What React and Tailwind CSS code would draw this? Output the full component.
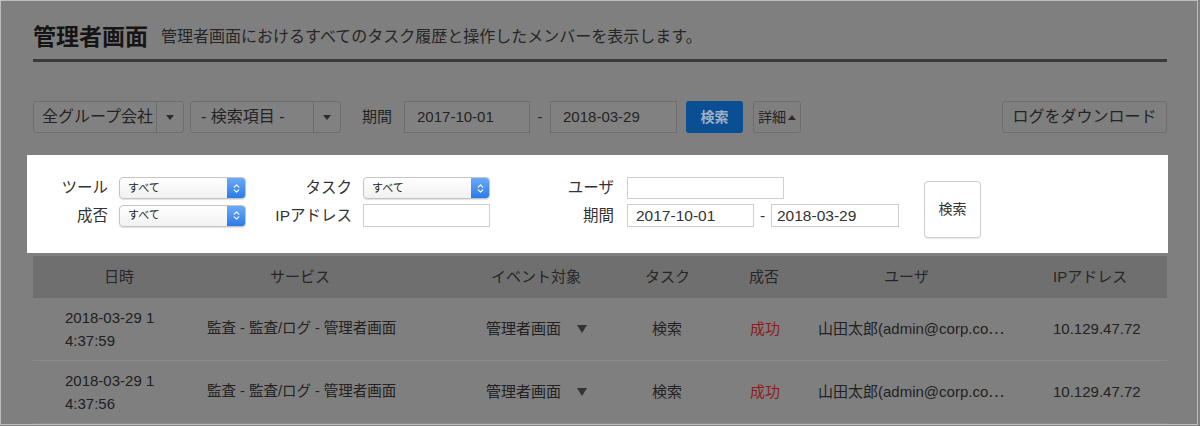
import { ChevronsUpDown } from 'lucide-react'

const font = "font-['Liberation_Sans','Noto_Sans_CJK_JP',sans-serif]"

const MacSelect = ({ width = 'w-[127px]' }) => (
  <div className={`${width} h-[22px] flex rounded-[4px] border border-[#c4c4c4] bg-gradient-to-b from-white to-[#f1f1f1] shadow-[0_1px_1px_rgba(0,0,0,0.12)] overflow-hidden`}>
    <div className="flex-1 flex items-center pl-[8px] text-[11px] text-[#222]">すべて</div>
    <div className="w-[18px] flex items-center justify-center bg-gradient-to-b from-[#6aaaf8] to-[#2a7ae8] text-white">
      <ChevronsUpDown size={11} strokeWidth={2.5} />
    </div>
  </div>
)

const Caret = () => (
  <svg width="8" height="5" viewBox="0 0 8 5"><path d="M0 0h8L4 5z" fill="#2c2c2c" /></svg>
)

const cols = [
  { w: 'w-[157px]', head: 'pl-[71px]', body: 'pl-[32px]' },
  { w: 'w-[250px]', head: 'pl-[80px]', body: 'pl-[17px]' },
  { w: 'w-[190px]', head: 'pl-[51px]', body: 'pl-[46px]' },
  { w: 'w-[90px]', head: 'pl-[15px]', body: 'pl-[22px]' },
  { w: 'w-[80px]', head: 'pl-[29px]', body: 'pl-[30px]' },
  { w: 'w-[230px]', head: 'pl-[84px]', body: 'pl-[18px]' },
  { w: 'w-[137px]', head: 'pl-[23px]', body: 'pl-[23px]' },
]

const headers = ['日時', 'サービス', 'イベント対象', 'タスク', '成否', 'ユーザ', 'IPアドレス']

const rows = [
  { date: '2018-03-29 1', time: '4:37:59' },
  { date: '2018-03-29 1', time: '4:37:56' },
]

export default function App() {
  return (
    <div className={`w-[1200px] h-[426px] bg-[#7f7f7f] overflow-hidden ${font}`}>
      <div className="w-[1198px] h-[425px] border border-[#bdbdbd] pl-[32px] pr-[30px] overflow-hidden">
        {/* title */}
        <div className="flex items-end pt-[22px] pb-[8px] border-b-[3px] border-[#3a3a3a]">
          <h1 className="text-[23px] font-bold text-[#151515] leading-[28px]">管理者画面</h1>
          <p className="ml-[13px] mb-[4px] text-[16px] text-[#262626] leading-[20px]">管理者画面におけるすべてのタスク履歴と操作したメンバーを表示します。</p>
        </div>

        {/* toolbar */}
        <div className="flex items-center mt-[39px] h-[32px] text-[16px] text-[#242424]">
          <div className="w-[151px] h-[32px] flex border border-[#6d6d6d] rounded-[3px] bg-[#818181]">
            <div className="flex-1 flex items-center pl-[8px]">全グループ会社</div>
            <div className="w-[27px] flex items-center justify-center border-l border-[#6d6d6d]"><Caret /></div>
          </div>
          <div className="ml-[6px] w-[151px] h-[32px] flex border border-[#6d6d6d] rounded-[3px] bg-[#818181]">
            <div className="flex-1 flex items-center pl-[10px]">- 検索項目 -</div>
            <div className="w-[27px] flex items-center justify-center border-l border-[#6d6d6d]"><Caret /></div>
          </div>
          <span className="ml-[21px] text-[15px]">期間</span>
          <div className="ml-[12px] w-[126px] h-[32px] flex items-center pl-[12px] border border-[#6d6d6d] bg-[#818181] text-[15px]">2017-10-01</div>
          <span className="w-[20px] text-center text-[15px]">-</span>
          <div className="w-[127px] h-[32px] flex items-center pl-[12px] border border-[#6d6d6d] bg-[#818181] text-[15px]">2018-03-29</div>
          <button className="ml-[9px] w-[57px] h-[32px] rounded-[3px] bg-[#0a4f93] text-[#9fb0c4] text-[14px] font-bold">検索</button>
          <button className="ml-[10px] w-[48px] h-[32px] rounded-[3px] border border-[#6d6d6d] flex items-center justify-center gap-[2px] text-[14px]">
            詳細
            <svg width="8" height="5" viewBox="0 0 8 5"><path d="M0 5h8L4 0z" fill="#2c2c2c" /></svg>
          </button>
          <button className="ml-auto w-[165px] h-[32px] rounded-[3px] border border-[#6d6d6d]">ログをダウンロード</button>
        </div>

        {/* detail panel */}
        <div className="mt-[22px] -ml-[6px] w-[1141px] h-[98px] bg-white flex items-start pt-[22px] text-[15.5px] text-[#333]">
          <div className="flex flex-col gap-[5px] w-[222px]">
            <div className="flex items-center h-[22px]">
              <span className="w-[81px] text-right">ツール</span>
              <span className="ml-[11px]"><MacSelect /></span>
            </div>
            <div className="flex items-center h-[23px]">
              <span className="w-[81px] text-right">成否</span>
              <span className="ml-[11px]"><MacSelect /></span>
            </div>
          </div>
          <div className="flex flex-col gap-[5px] w-[241px]">
            <div className="flex items-center h-[22px]">
              <span className="w-[103px] text-right">タスク</span>
              <span className="ml-[11px]"><MacSelect /></span>
            </div>
            <div className="flex items-center h-[23px]">
              <span className="w-[103px] text-right">IPアドレス</span>
              <div className="ml-[11px] w-[127px] h-[23px] border border-[#cfcfcf]"></div>
            </div>
          </div>
          <div className="flex flex-col gap-[5px] ml-[8px]">
            <div className="flex items-center h-[22px]">
              <span className="w-[116px] text-right">ユーザ</span>
              <div className="ml-[13px] w-[157px] h-[22px] border border-[#cfcfcf]"></div>
            </div>
            <div className="flex items-center h-[23px]">
              <span className="w-[116px] text-right">期間</span>
              <div className="ml-[13px] w-[127px] h-[23px] border border-[#cfcfcf] flex items-center pl-[8px] text-[#333]">2017-10-01</div>
              <span className="w-[17px] text-center">-</span>
              <div className="w-[128px] h-[23px] border border-[#cfcfcf] flex items-center pl-[5px] text-[#333]">2018-03-29</div>
            </div>
          </div>
          <button className="ml-[25px] mt-[4px] w-[57px] h-[57px] rounded-[4px] border border-[#cdcdcd] bg-white text-[14px] text-[#333] shadow-[0_1px_1px_rgba(0,0,0,0.08)]">検索</button>
        </div>

        {/* table */}
        <div className="mt-[3px] text-[15px] text-[#222]">
          <div className="flex h-[42px] items-center bg-[#6f6f6f] text-[#262626]">
            {headers.map((h, i) => (
              <div key={h} className={`${cols[i].w} ${cols[i].head} shrink-0`}>{h}</div>
            ))}
          </div>
          {rows.map((r, ri) => (
            <div key={ri} className="flex h-[63px] items-center border-b border-[#8b8b8b]">
              <div className={`${cols[0].w} ${cols[0].body} shrink-0 leading-[23px] text-[#202020]`}>
                <div>{r.date}</div>
                <div>{r.time}</div>
              </div>
              <div className={`${cols[1].w} ${cols[1].body} shrink-0 text-[14.5px]`}>監査 - 監査/ログ - 管理者画面</div>
              <div className={`${cols[2].w} ${cols[2].body} shrink-0 flex items-center`}>
                管理者画面
                <svg className="ml-[16px]" width="10" height="8" viewBox="0 0 10 8"><path d="M0 0h10L5 8z" fill="#333" /></svg>
              </div>
              <div className={`${cols[3].w} ${cols[3].body} shrink-0`}>検索</div>
              <div className={`${cols[4].w} ${cols[4].body} shrink-0 text-[#8e1c1c]`}>成功</div>
              <div className={`${cols[5].w} ${cols[5].body} shrink-0`}>山田太郎(admin@corp.co⋯</div>
              <div className={`${cols[6].w} ${cols[6].body} shrink-0`}>10.129.47.72</div>
            </div>
          ))}
        </div>
      </div>
    </div>
  )
}
